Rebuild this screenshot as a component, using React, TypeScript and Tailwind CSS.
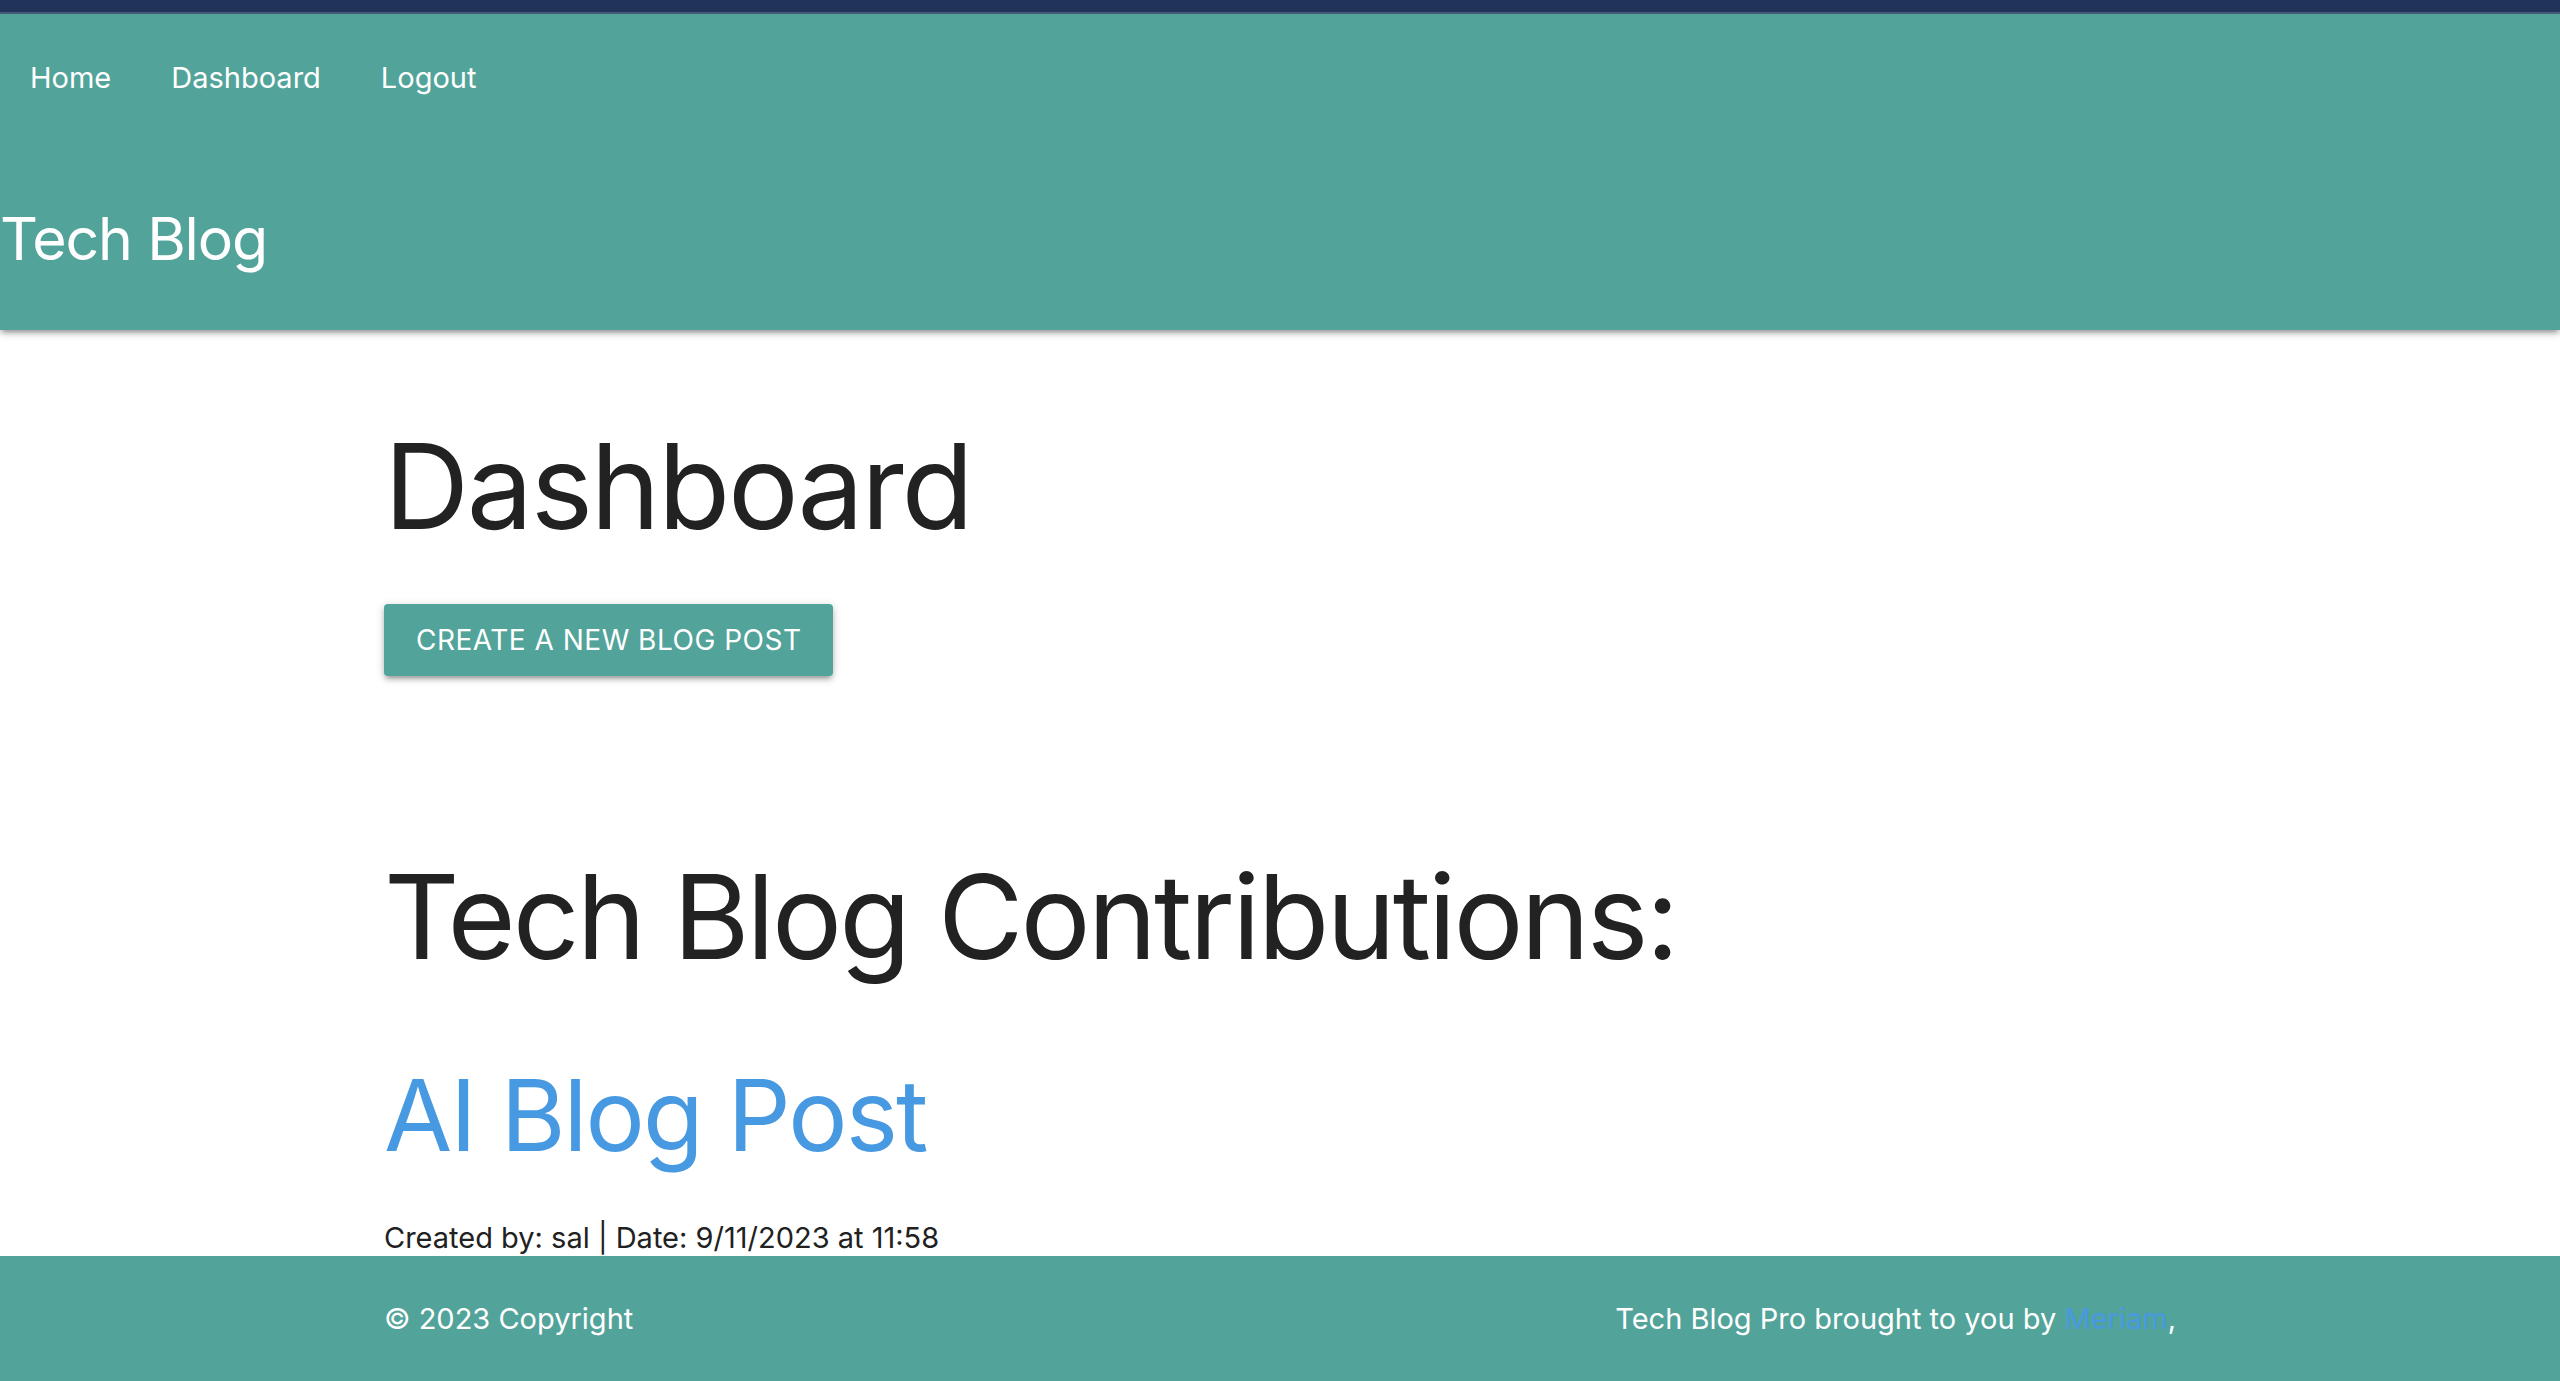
import React from 'react';

const navLinks = ['Home', 'Dashboard', 'Logout'];

export default function App() {
  return (
    <div className="min-h-screen bg-white font-['Inter','Noto_Sans',sans-serif] text-[#222222]">
      {/* Header */}
      <header className="relative z-10 bg-[#52a39a] shadow-[0_4px_4px_0_rgba(0,0,0,0.14),0_6px_2px_-4px_rgba(0,0,0,0.12),0_2px_10px_0_rgba(0,0,0,0.2)]">
        <div className="h-[14px] bg-[#22335a] border-b-2 border-[#46597b]" />
        <nav className="flex h-[128px] items-center">
          {navLinks.map((link) => (
            <a key={link} href="#" className="px-[30px] text-[29px] leading-[128px] text-white">
              {link}
            </a>
          ))}
        </nav>
        <div className="flex h-[188px] items-center pt-[5px]">
          <a href="#" className="text-[59px] leading-none tracking-[-0.02em] text-white">
            Tech Blog
          </a>
        </div>
      </header>

      {/* Main */}
      <main className="mx-auto w-[70%] pt-[86px]">
        <h1 className="text-[118px] leading-[140px] tracking-[-0.02em]">Dashboard</h1>
        <button className="mt-[48px] flex h-[72px] items-center rounded-[4px] bg-[#52a39a] px-[32px] text-[28px] uppercase tracking-[0.5px] text-white shadow-[0_4px_4px_0_rgba(0,0,0,0.14),0_6px_2px_-4px_rgba(0,0,0,0.12),0_2px_10px_0_rgba(0,0,0,0.2)]">
          Create a new blog post
        </button>

        <h2 className="mt-[171px] text-[117px] leading-[140px] tracking-[-0.025em]">Tech Blog Contributions:</h2>
        <div>
          <a href="#" className="mt-[68px] block text-[99px] leading-[120px] tracking-[-0.02em] text-[#4799e1]">
            AI Blog Post
          </a>
          <p className="mt-[45px] text-[29px] leading-[36px] text-[#212121]">
            Created by: sal | Date: 9/11/2023 at 11:58
          </p>
        </div>
      </main>

      {/* Footer */}
      <footer className="bg-[#52a39a]">
        <div className="mx-auto flex h-[125px] w-[70%] items-center justify-between text-[29px] text-white">
          <span>© 2023 Copyright</span>
          <span>
            Tech Blog Pro brought to you by <a href="#" className="text-[#4799e1]">Meriam</a>,
          </span>
        </div>
      </footer>
    </div>
  );
}
